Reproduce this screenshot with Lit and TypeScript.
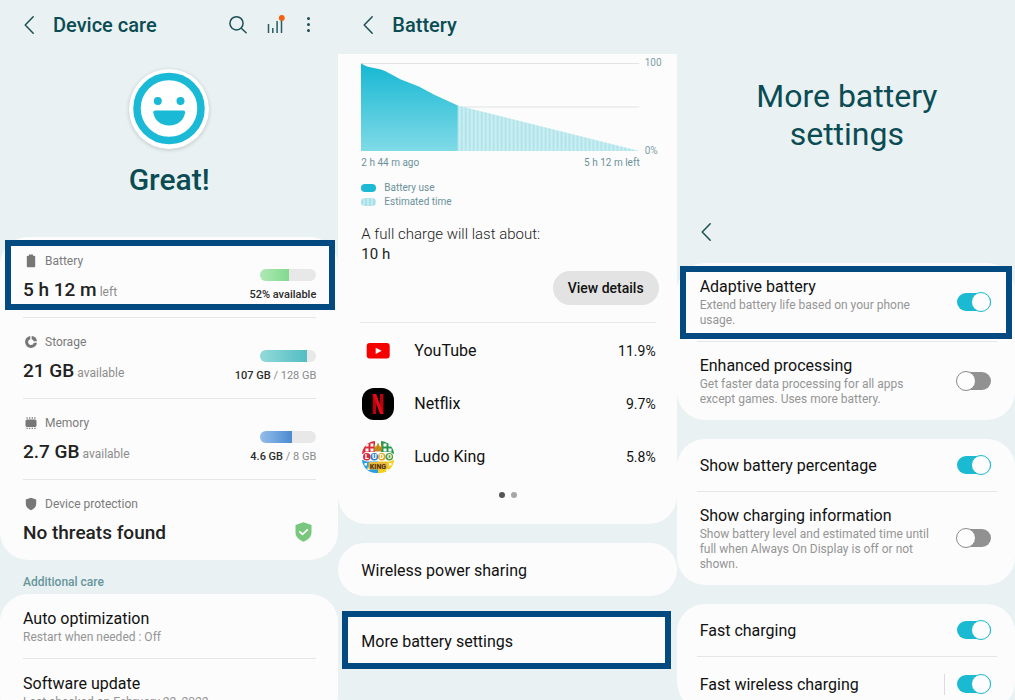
import { LitElement, html, svg, css, nothing } from "lit";
import { customElement, property } from "lit/decorators.js";

const base = css`
  *, *::before, *::after { box-sizing: border-box; }
  :host { display: block; }
  h1, h2, p, ul { margin: 0; padding: 0; }
  ul { list-style: none; }
  a { color: inherit; text-decoration: none; }
  button { font: inherit; color: inherit; border: 0; padding: 0; background: none; cursor: pointer; }
  svg { display: block; }
  .card { background: #fcfcfc; border-radius: 28px; }
  .highlight { position: relative; }
  .highlight::before {
    content: "";
    position: absolute;
    inset: 3px 3px 2px 3px;
    border: 6px solid #034a80;
    pointer-events: none;
  }
`;

const backIcon = svg`<svg width="12" height="20" viewBox="0 0 12 20" fill="none" stroke="#1d4f56" stroke-width="1.5"
  stroke-linecap="round" stroke-linejoin="round"><path d="M10.2 1.8 2.2 10l8 8.2"/></svg>`;

@customElement("toggle-row")
class ToggleRow extends LitElement {
  @property() heading = "";
  @property() note = "";
  @property({ type: Boolean }) on = false;
  @property({ type: Boolean }) split = false;
  static styles = [base, css`
    .row { display: flex; align-items: center; min-height: 52px; padding: 14px 24px 13px 23px; }
    .row.single { padding-block: 17px 15px; }
    .text { flex: 1; display: flex; flex-direction: column; gap: 1px; }
    .title { font-size: 16px; line-height: 20px; color: #111; }
    .note { font-size: 12px; line-height: 15px; color: #959595; padding-right: 18px; }
    .bar { width: 1px; height: 21px; background: #dcdcdc; margin-right: 12px; }
    .switch {
      appearance: none; flex: none; position: relative; width: 34px; height: 18px; margin: 0 0 2px;
      border-radius: 9px; background: #919191; cursor: pointer;
    }
    .switch::before {
      content: ""; position: absolute; top: -1px; left: -1px; width: 20px; height: 20px;
      border-radius: 50%; background: #fdfdfd; border: 1px solid #8a8a8a;
    }
    .switch:checked { background: #1bbad3; }
    .switch:checked::before { left: 14px; border-color: #1bbad3; }
  `];
  render() {
    return html`<label class="row ${this.note ? "" : "single"}">
      <span class="text">
        <span class="title">${this.heading}</span>
        ${this.note ? html`<span class="note">${this.note}</span>` : nothing}
      </span>
      ${this.split ? html`<span class="bar"></span>` : nothing}
      <input class="switch" type="checkbox" role="switch" .checked=${this.on}>
    </label>`;
  }
}

const glyphs: Record<string, unknown> = {
  battery: svg`<path d="M6 1.5h4v1.3h1.2q1 0 1 1v9.4q0 1-1 1H4.800q-1 0-1-1V3.800q0-1 1-1H6z"/>`,
  storage: svg`<path d="M7.300 2A6 6 0 1 0 14 8.700h-3.200A2.900 2.900 0 1 1 7.300 5.200zM8.700 2v3.200A3 3 0 0 1 10.800 7.300H14A6 6 0 0 0 8.700 2z"/>`,
  memory: svg`<rect x="2.500" y="4.500" width="11" height="7.500" rx="1.500"/><path d="M3.500 2.300h1.200v1.400H3.500zm2.600 0h1.200v1.400H6.100zm2.600 0h1.200v1.400H8.700zm2.600 0h1.200v1.400h-1.200zM3.500 12.800h1.200v1.300H3.500zm2.600 0h1.200v1.300H6.100zm2.600 0h1.200v1.300H8.700zm2.600 0h1.200v1.300h-1.200z"/>`,
  shield: svg`<path d="M8 1.700 13.200 3.500v4.300c0 3-2.200 5.200-5.200 6.500-3-1.300-5.200-3.500-5.200-6.500V3.500z"/>`,
};

const stats = [
  { icon: "battery", label: "Battery", value: "5 h 12 m", unit: "left", fill: 52, tone: "green", strong: "52% available", rest: "", marked: true },
  { icon: "storage", label: "Storage", value: "21 GB", unit: "available", fill: 84, tone: "teal", strong: "107 GB", rest: " / 128 GB", marked: false },
  { icon: "memory", label: "Memory", value: "2.7 GB", unit: "available", fill: 57, tone: "blue", strong: "4.6 GB", rest: " / 8 GB", marked: false },
];

@customElement("device-care")
class DeviceCare extends LitElement {
  static styles = [base, css`
    .head { display: flex; align-items: center; height: 50px; padding: 0 22px 0 23px; color: #0b4c54; }
    .title { flex: 1; margin-left: 18px; font-size: 20px; line-height: 24px; font-weight: 500; }
    .tools { display: flex; align-items: center; gap: 17px; }
    .hero { display: flex; flex-direction: column; align-items: center; gap: 13px; padding: 19px 0 39px; }
    .face { border-radius: 50%; box-shadow: 0 1px 4px #0000002e; }
    .state { font-size: 30px; line-height: 36px; font-weight: 500; color: #0b4c54; }
    .stat { display: flex; align-items: flex-end; justify-content: space-between; padding: 16px 22px 14px 23px; }
    .stats > li:not(:last-child)::after, .links > li:not(:last-child)::after {
      content: ""; display: block; height: 1px; margin: 0 22px 0 23px; background: #e6e6e6;
    }
    .highlight::before { inset: 3px 3px 8px 5px; }
    .label { display: flex; align-items: center; gap: 6px; font-size: 12px; line-height: 16px; color: #7b7b7b; margin-bottom: 8px; }
    .value { display: flex; align-items: baseline; gap: 3px; height: 26px; font-size: 19px; line-height: 26px; font-weight: 500; color: #222; white-space: nowrap; }
    .unit { font-size: 12px; font-weight: 400; color: #8c8c8c; }
    .side { display: flex; flex-direction: column; align-items: flex-end; gap: 6px; font-size: 11px; line-height: 16px; color: #8a8a8a; }
    .amount { font-weight: 500; color: #2b2b2b; }
    .meter { width: 56px; height: 12px; border-radius: 6px; overflow: hidden; background: #e8e8e8; }
    .fill { height: 100%; }
    .green { background: linear-gradient(90deg, #afe9b5, #82d98e); }
    .teal { background: linear-gradient(90deg, #93dad8, #53bdc3); }
    .blue { background: linear-gradient(90deg, #94bdea, #4b8bd0); }
    .ok { margin-bottom: 4px; }
    .section { padding: 14px 23px 4px; font-size: 12px; line-height: 16px; font-weight: 500; color: #66969b; }
    .link { display: flex; flex-direction: column; gap: 1px; padding: 15px 23px 13px; font-size: 16px; line-height: 20px; color: #111; }
    .note { font-size: 12px; line-height: 15px; color: #959595; }
  `];
  render() {
    return html`
      <header class="head">
        <button aria-label="Back">${backIcon}</button>
        <h1 class="title">Device care</h1>
        <div class="tools">
          <button aria-label="Search"><svg width="20" height="20" viewBox="0 0 20 20" fill="none" stroke="#1d4f56" stroke-width="1.5" stroke-linecap="round"><circle cx="8.500" cy="8.300" r="6.600"/><path d="m13.300 13.200 4.800 4.500"/></svg></button>
          <button aria-label="Usage"><svg width="22" height="20" viewBox="0 0 22 20" fill="none" stroke="#2a5c66" stroke-width="1.500"><path d="M3.500 9v9M7.800 13V18M12.100 6V18M16.500 5v13"/><circle cx="16.800" cy="2.900" r="2.900" fill="#f4600c" stroke="none"/></svg></button>
          <button aria-label="More options"><svg width="12" height="20" viewBox="0 0 12 20" fill="#1d4f56"><circle cx="4.500" cy="3.500" r="1.500"/><circle cx="4.500" cy="9.500" r="1.500"/><circle cx="4.500" cy="15.500" r="1.500"/></svg></button>
        </div>
      </header>
      <section class="hero">
        <svg class="face" width="80" height="80" viewBox="0 0 80 80">
          <circle cx="40" cy="40" r="40" fill="#fff"/>
          <circle cx="40" cy="39.500" r="32" fill="none" stroke="#1abad6" stroke-width="7.500"/>
          <circle cx="28.800" cy="32" r="4" fill="#1abad6"/><circle cx="51.500" cy="32" r="4" fill="#1abad6"/>
          <path fill="#1abad6" d="M26 41.500h28.500q1.700 0 1.600 1.700C55.400 51 48.500 56.500 40.200 56.500S25 51 24.300 43.200Q24.200 41.500 26 41.500z"/>
        </svg>
        <p class="state">Great!</p>
      </section>
      <ul class="card stats">
        ${stats.map(s => html`<li class=${s.marked ? "highlight" : ""}>
          <a class="stat" href="#${s.icon}">
            <div>
              <p class="label"><svg width="16" height="16" viewBox="0 0 16 16" fill="#777">${glyphs[s.icon]}</svg>${s.label}</p>
              <p class="value">${s.value}<span class="unit">${s.unit}</span></p>
            </div>
            <div class="side">
              <div class="meter"><div class="fill ${s.tone}" style="width:${s.fill}%"></div></div>
              <p><span class="amount">${s.strong}</span>${s.rest}</p>
            </div>
          </a></li>`)}
        <li><a class="stat" href="#protection">
          <div>
            <p class="label"><svg width="16" height="16" viewBox="0 0 16 16" fill="#777">${glyphs.shield}</svg>Device protection</p>
            <p class="value">No threats found</p>
          </div>
          <svg class="ok" width="26" height="20" viewBox="0 0 26 20"><path fill="#79c77c" d="M13.500 .3 21.500 3v7.300c0 4.300-3.300 7.600-8 9.500-4.700-1.900-8-5.200-8-9.500V3z"/><path d="m9.300 9.300 3.300 3 5.200-5" fill="none" stroke="#fff" stroke-width="1.800"/></svg>
        </a></li>
      </ul>
      <h2 class="section">Additional care</h2>
      <ul class="card links">
        <li><a class="link" href="#auto">Auto optimization<span class="note">Restart when needed : Off</span></a></li>
        <li><a class="link" href="#update">Software update<span class="note">Last checked on February 22, 2022</span></a></li>
      </ul>`;
  }
}

const apps = [
  { name: "YouTube", share: "11.9%", icon: svg`<rect x="4.700" y="8" width="23" height="15.500" rx="3" fill="#f70000"/><path fill="#fff" d="m13.700 12.700 6 3.100-6 3.100z"/>` },
  { name: "Netflix", share: "9.7%", icon: svg`<rect width="32" height="32" rx="12" fill="#000"/><rect x="10.700" y="6" width="3.500" height="20" fill="#b1060f"/><rect x="18" y="6" width="3.500" height="20" fill="#b1060f"/><path fill="#e50914" d="M10.700 6h3.500l7.300 20h-3.500z"/>` },
  { name: "Ludo King", share: "5.8%", icon: svg`
      <clipPath id="disc"><rect width="32" height="32" rx="14"/></clipPath>
      <g clip-path="url(#disc)">
        <rect width="32" height="32" fill="#fff"/>
        <path fill="#dc2c3c" d="M0 0h13v13H0z"/><path fill="#22984a" d="M19 0h13v13H19z"/>
        <path fill="#2a9fe4" d="M0 19h16v13H0z"/><path fill="#f6cf1d" d="M16 19h16v13H16z"/>
        <path fill="#fff" d="M3.500 2.500h3v3h-3zm5 0h3v3h-3zm-5 5h3v3h-3zm5 0h3v3h-3zm13-5h3v3h-3zm5 0h3v3h-3zm-5 5h3v3h-3zm5 0h3v3h-3zM2.500 22h2.500v2.500H2.500zm3 4.500h2.500v2.500H5.500zM27 22h2.500v2.500H27zm-3 6h2.500v2.500H24z"/>
        <path fill="#c58a1c" d="m11.500 3 2.500 3 2-4.500L18 6l2.500-3-1 7.500h-7z"/>
        <rect x="0" y="11" width="32" height="9.500" rx="4.700" fill="#fff"/>
        <circle cx="4.800" cy="15.800" r="3.800" fill="#d7263d"/><circle cx="12.300" cy="15.800" r="3.800" fill="#2b7fc4"/><circle cx="19.800" cy="15.800" r="3.800" fill="#dda51d"/><circle cx="27.300" cy="15.800" r="3.800" fill="#4a9d3c"/>
        <g font-size="7" font-weight="900" text-anchor="middle" fill="#fff"><text x="4.800" y="18.300">L</text><text x="12.300" y="18.300">U</text><text x="19.800" y="18.300">D</text><text x="27.300" y="18.300">O</text></g>
        <rect x="6.500" y="21" width="19" height="7.500" rx="1.500" fill="#e8b93a"/>
        <text x="16" y="27.500" font-size="7" font-weight="900" text-anchor="middle" fill="#5b3410">KING</text>
      </g>` },
];

@customElement("battery-usage")
class BatteryUsage extends LitElement {
  static styles = [base, css`
    .head { display: flex; align-items: center; height: 54px; padding: 0 24px 5px; color: #0b4c54; }
    .title { margin-left: 18px; font-size: 20px; line-height: 24px; font-weight: 500; }
    .usage { border-radius: 0 0 28px 28px; padding: 3px 0 26px; }
    .chart { display: grid; grid-template-columns: 1fr 17px; column-gap: 5px; padding: 0 15px 0 23px; font-size: 10px; line-height: 12px; color: #7fa0a8; }
    .plot { width: 100%; height: 88px; margin: 6px 0; }
    .scale { display: flex; flex-direction: column; justify-content: space-between; }
    .span { display: flex; justify-content: space-between; color: #6b929b; }
    .legend { padding: 12px 23px 0; font-size: 10px; line-height: 14px; color: #6b929b; }
    .key { display: flex; align-items: center; gap: 8px; }
    .swatch { width: 15px; height: 8px; border-radius: 4px; background: #1bb9d3; }
    .swatch.est { background: repeating-linear-gradient(90deg, #a6e1e8 0 2px, #c3eaef 2px 4px); }
    .last { padding: 15px 23px 0; font-size: 15px; line-height: 20px; font-weight: 300; color: #222; }
    .hours { font-weight: 400; }
    .actions { display: flex; justify-content: flex-end; padding: 7px 18px 17px; }
    .details { height: 34px; padding: 0 15px; border-radius: 17px; background: #e3e3e3; font-size: 14px; font-weight: 500; color: #111; }
    .apps { margin: 0 21px 0 22px; border-top: 1px solid #e8e8e8; padding: 1px 0; }
    .app { display: flex; align-items: center; height: 53px; gap: 20px; padding-left: 2px; font-size: 16px; color: #111; }
    .name { flex: 1; }
    .share { font-size: 14px; }
    .dots { display: flex; justify-content: center; gap: 6px; padding: 8px 0 0 2px; }
    .dot { width: 6px; height: 6px; border-radius: 50%; background: #a6a6a6; }
    .dot.now { background: #555; }
    .single { display: block; font-size: 16px; line-height: 20px; color: #111; padding: 18px 23px 15px; margin-top: 19px; }
    .more { display: block; margin: 15px 6px 0 4px; border: 6px solid #034a80; padding: 15px 13px 11px; background: #fcfcfc; font-size: 16px; line-height: 20px; color: #111; }
  `];
  render() {
    return html`
      <header class="head"><button aria-label="Back">${backIcon}</button><h1 class="title">Battery</h1></header>
      <section class="card usage">
        <div class="chart">
          <svg class="plot" viewBox="0 0 279 88" preserveAspectRatio="none" role="img" aria-label="Battery level">
            <defs>
              <linearGradient id="used" x1="0" y1="0" x2="0" y2="1"><stop offset="0" stop-color="#16b8d3"/><stop offset="1" stop-color="#80dae7"/></linearGradient>
              <pattern id="bars" width="4" height="88" patternUnits="userSpaceOnUse"><rect width="4" height="88" fill="#cbeef2"/><rect width="2" height="88" fill="#b0e4ea"/></pattern>
            </defs>
            <path d="M0 .5h279M97 44h182" stroke="#e2e4e4" stroke-width="1"/>
            <path fill="url(#bars)" d="M97 42.500 279 88H97z"/>
            <path fill="url(#used)" d="M0 .5 6 3.500 20 6.500 24 8 40 16.500 58 23.500 74 32 97 42.500V88H0z"/>
          </svg>
          <div class="scale"><span>100</span><span>0%</span></div>
          <div class="span"><span>2 h 44 m ago</span><span>5 h 12 m left</span></div>
        </div>
        <ul class="legend">
          <li class="key"><span class="swatch"></span>Battery use</li>
          <li class="key"><span class="swatch est"></span>Estimated time</li>
        </ul>
        <p class="last">A full charge will last about:<br><span class="hours">10 h</span></p>
        <div class="actions"><button class="details">View details</button></div>
        <ul class="apps">
          ${apps.map(a => html`<li class="app"><svg width="32" height="32" viewBox="0 0 32 32">${a.icon}</svg><span class="name">${a.name}</span><span class="share">${a.share}</span></li>`)}
        </ul>
        <div class="dots"><span class="dot now"></span><span class="dot"></span></div>
      </section>
      <a class="card single" href="#wireless">Wireless power sharing</a>
      <a class="more" href="#more">More battery settings</a>`;
  }
}

const groups = [
  [
    { heading: "Adaptive battery", note: "Extend battery life based on your phone usage.", on: true, marked: true },
    { heading: "Enhanced processing", note: "Get faster data processing for all apps except games. Uses more battery.", on: false },
  ],
  [
    { heading: "Show battery percentage", on: true },
    { heading: "Show charging information", note: "Show battery level and estimated time until full when Always On Display is off or not shown.", on: false },
  ],
  [
    { heading: "Fast charging", on: true },
    { heading: "Fast wireless charging", on: true, split: true },
  ],
] as { heading: string; note?: string; on: boolean; marked?: boolean; split?: boolean }[][];

@customElement("battery-settings")
class BatterySettings extends LitElement {
  static styles = [base, css`
    .title { padding: 77px 62px 0 64px; text-align: center; font-size: 32px; line-height: 38px; font-weight: 400; color: #0b4c54; }
    .nav { display: flex; padding: 69px 23px 21px; }
    .groups { display: flex; flex-direction: column; gap: 19px; }
    .rule { height: 1px; border: 0; margin: 0 18px 0 20px; background: #e6e6e6; }
  `];
  render() {
    return html`
      <h1 class="title">More battery settings</h1>
      <div class="nav"><button aria-label="Back">${backIcon}</button></div>
      <div class="groups">
        ${groups.map(g => html`<ul class="card group">
          ${g.map((r, i) => html`<li class=${r.marked ? "highlight" : ""}>
            ${i ? html`<hr class="rule">` : nothing}
            <toggle-row .heading=${r.heading} .note=${r.note ?? ""} .on=${r.on} .split=${!!r.split}></toggle-row>
          </li>`)}
        </ul>`)}
      </div>`;
  }
}

@customElement("app-root")
class AppRoot extends LitElement {
  static styles = [base, css`
    :host { height: 100vh; overflow: hidden; background: #e9f1f2; font-family: Roboto, sans-serif; }
    .screens { display: grid; grid-template-columns: repeat(3, minmax(0, 1fr)); }
  `];
  render() {
    return html`<main class="screens"><device-care></device-care><battery-usage></battery-usage><battery-settings></battery-settings></main>`;
  }
}
